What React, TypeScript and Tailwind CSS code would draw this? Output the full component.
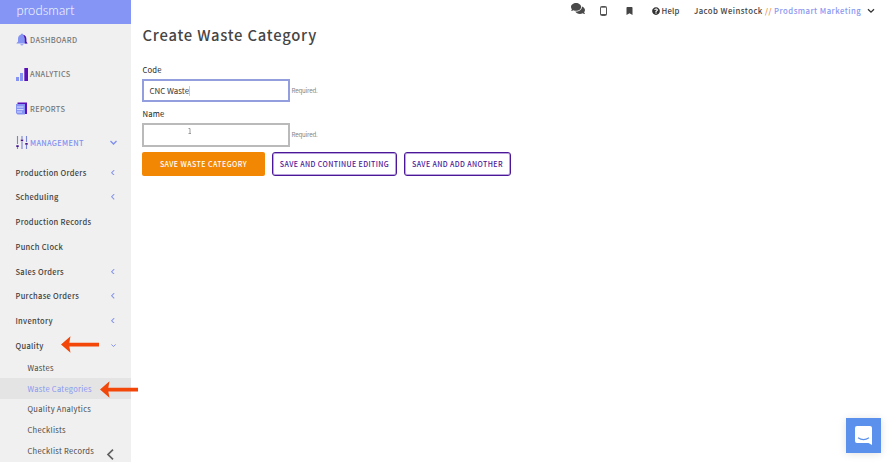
import { FaComments, FaBookmark, FaQuestionCircle } from "react-icons/fa";

const sections = [
  { label: "Production Orders", open: false, arrow: true },
  { label: "Scheduling", open: false, arrow: true },
  { label: "Production Records", open: false, arrow: false },
  { label: "Punch Clock", open: false, arrow: false },
  { label: "Sales Orders", open: false, arrow: true },
  { label: "Purchase Orders", open: false, arrow: true },
  { label: "Inventory", open: false, arrow: true },
  { label: "Quality", open: true, arrow: true },
];

const subItems = ["Wastes", "Waste Categories", "Quality Analytics", "Checklists", "Checklist Records"];

function BellIcon() {
  return (
    <svg className="shrink-0" width="12" height="13" viewBox="0 0 12 13">
      <path d="M6 0.4C7 .4 7 1.4 7 1.5C9.4 2.2 9.8 4 9.8 6V8.5L11.5 10.5H0.3L2 8.5V6C2 4 2.8 2.2 5 1.5C5 1.4 5 .4 6 .4Z" fill="#8594f3" />
      <path d="M7.4 1.7C9.7 2.4 10.4 4 10.4 6V8.5L11.6 10.5H8.8V5.5Z" fill="#5313ab" />
      <path d="M4.3 11.2H7.5C7.2 12.8 4.6 12.8 4.3 11.2Z" fill="#8594f3" />
    </svg>
  );
}

function BarsIcon() {
  return (
    <svg className="shrink-0" width="12" height="13" viewBox="0 0 12 13">
      <path d="M0 9H3V13H0ZM4 5H7V13H4Z" fill="#8594f3" />
      <path d="M8.3 0H12V13H8.3Z" fill="#5a10b8" />
    </svg>
  );
}

function ReportsIcon() {
  return (
    <svg className="shrink-0" width="12" height="13" viewBox="0 0 12 13">
      <path d="M1.5 .5H11V12H9V2.5H1.5Z" fill="#5a10b8" />
      <path d="M0 2H9V12.5H1.5L0 11Z" fill="#8594f3" />
      <path d="M1 5H7.5M1 7.6H7.5M1 10H6" stroke="#eef0ff" strokeWidth=".8" />
    </svg>
  );
}

function SlidersIcon() {
  return (
    <svg className="shrink-0" width="12" height="13" viewBox="0 0 12 13">
      <path d="M1.5 0V8M1.5 11V13M6 0V3M6 6V13M10.5 0V6M10.5 9V13" stroke="#7784d4" strokeWidth="1.1" />
      <path d="M.3 9.2H2.7V11H.3ZM4.8 3.4H7.2V5.2H4.8ZM9.3 6.9H11.7V8.7H9.3Z" fill="#43108e" />
    </svg>
  );
}

const mainItems = [
  { label: "DASHBOARD", icon: <BellIcon />, active: false },
  { label: "ANALYTICS", icon: <BarsIcon />, active: false },
  { label: "REPORTS", icon: <ReportsIcon />, active: false },
  { label: "MANAGEMENT", icon: <SlidersIcon />, active: true },
];

function Chevron({ down, size = 5 }: { down: boolean; size?: number }) {
  return down ? (
    <svg width={size} height={size} viewBox="0 0 6 6" fill="none">
      <path d="M.4 1.7L3 4.3L5.6 1.7" stroke="#8190ee" strokeWidth="1.2" />
    </svg>
  ) : (
    <svg width={size} height={size} viewBox="0 0 6 6" fill="none">
      <path d="M4.6 .2L1.8 3L4.6 5.8" stroke="#8190ee" strokeWidth="1.1" />
    </svg>
  );
}

function RedArrow({ className }: { className: string }) {
  return (
    <svg className={`absolute ${className}`} width="38" height="17" viewBox="0 0 38 17">
      <path d="M0 8.5L9.5 .3L8.3 6.7H38V10.4H8.3L9.5 16.7Z" fill="#f24708" />
    </svg>
  );
}

export default function App() {
  return (
    <div className="relative flex h-[462px] w-[890px] overflow-hidden bg-white font-['Noto_Sans_CJK_SC','Noto_Sans',sans-serif] text-[#3f3f3f]">
      <aside className="h-full w-[131px] shrink-0 bg-[#f0f0f0]">
        <div className="h-6 bg-[#8595f5] pl-[16.5px] font-['Lato',sans-serif] text-[13px] leading-[21px] font-light tracking-[0.1px] text-white">
          prodsmart
        </div>
        <nav>
          <div className="-mt-[1.4px]">
            {mainItems.map((item) => (
              <div key={item.label} className="flex h-[34.4px] items-center pl-[16px]">
                {item.icon}
                <span className={`ml-[2px] text-[7.4px] leading-none font-medium tracking-[0.3px] ${item.active ? "text-[#8190f0]" : "text-[#777777]"}`}>
                  {item.label}
                </span>
                {item.active && (
                  <span className="mr-[14px] ml-auto">
                    <Chevron down size={7} />
                  </span>
                )}
              </div>
            ))}
          </div>
          {sections.map((s) => (
            <div key={s.label} className="flex h-[24.7px] items-center justify-between pr-[15.5px] pl-[15.5px]">
              <span className="text-[7.5px] leading-none font-medium tracking-[0.3px]">{s.label}</span>
              {s.arrow && <Chevron down={s.open} size={s.open ? 5 : 5.5} />}
            </div>
          ))}
          {subItems.map((label) => (
            <div
              key={label}
              className={`flex h-[20.6px] items-center pl-[27.5px] text-[7.5px] leading-none tracking-[0.3px] ${label === "Waste Categories" ? "bg-[#e4e4e4] text-[#8796f2]" : "text-[#464646]"}`}
            >
              {label}
            </div>
          ))}
        </nav>
      </aside>

      <main className="flex-1 pl-[11px]">
        <header className="flex h-[21px] items-center text-[7.75px] leading-none font-medium">
          <FaComments className="-mt-[4px] ml-[429px] h-[13px] w-[14px] text-[#4a4a4a]" />
          <svg className="ml-[15px]" width="7" height="10" viewBox="0 0 7 10">
            <rect x=".5" y=".5" width="6" height="9" rx="1" fill="#fff" stroke="#555" />
            <path d="M.7 1.2H6.3M.7 8.5H6.3" stroke="#555" />
          </svg>
          <FaBookmark className="ml-[19px] h-[8px] w-[7px] text-[#444]" />
          <FaQuestionCircle className="ml-[18.5px] h-[8px] w-[8px] text-[#333]" />
          <span className="ml-[2px] w-[32.5px] tracking-[0.2px]">Help</span>
          <span className="whitespace-nowrap tracking-[0.45px]">
            Jacob Weinstock <span className="text-[#f08532]">//</span> <span className="text-[#8796f0]">Prodsmart Marketing</span>
          </span>
          <svg className="ml-[6px]" width="8" height="6" viewBox="0 0 8 6" fill="none">
            <path d="M1 1.2L4 4.2L7 1.2" stroke="#333" strokeWidth="1.3" />
          </svg>
        </header>

        <h1 className="mt-1 h-[20px] pl-[0.5px] text-[14.8px] leading-[20px] font-medium tracking-[0.78px] text-[#464646]">Create Waste Category</h1>

        <form className="pt-[19px]">
          <label className="block h-[15px] pl-[0.5px] text-[7.7px] leading-[12px] tracking-[0.15px] text-[#222]">Code</label>
          <div className="flex h-[23px] items-center">
            <div className="flex h-[23px] w-[148px] items-center border-2 border-[#929ede] pl-[5.5px] text-[7.9px] leading-none text-[#333]">
              CNC Waste<span className="h-[10px] w-px bg-[#c5c9ee]" />
            </div>
            <span className="mt-px ml-[1.5px] text-[6.2px] leading-none tracking-[-0.2px] text-[#858585]">Required.</span>
          </div>
          <label className="mt-[6px] block h-[15px] pl-[0.5px] text-[7.7px] leading-[12px] tracking-[0.15px] text-[#222]">Name</label>
          <div className="flex h-[24px] items-center">
            <div className="flex h-[24px] w-[148px] border-2 border-[#bababa] pt-[3px] pl-[44px]">
              <svg width="4" height="6" viewBox="0 0 4 6">
                <path d="M.5 .5H2V5.5M.5 5.5H3" fill="none" stroke="#777" strokeWidth=".7" />
              </svg>
            </div>
            <span className="ml-[1.5px] text-[6.2px] leading-none tracking-[-0.2px] text-[#858585]">Required.</span>
          </div>
          <div className="mt-[5px] flex h-[24px] gap-[7px] text-[7px] leading-none font-medium whitespace-nowrap">
            <button type="button" className="w-[123px] rounded-[2px] bg-[#f28703] tracking-[0.45px] text-white">SAVE WASTE CATEGORY</button>
            <button type="button" className="w-[125px] rounded-[3px] border border-[#4b1797] tracking-[0.4px] text-[#4b1797] shadow-[inset_0_0_0_1px_#b9a3dc]">SAVE AND CONTINUE EDITING</button>
            <button type="button" className="w-[107px] rounded-[3px] border border-[#4b1797] tracking-[0.4px] text-[#4b1797] shadow-[inset_0_0_0_1px_#b9a3dc]">SAVE AND ADD ANOTHER</button>
          </div>
        </form>
      </main>

      <RedArrow className="top-[336px] left-[61px]" />
      <RedArrow className="top-[380.5px] left-[99.5px]" />
      <svg className="absolute top-[449px] left-[106px]" width="9" height="11" viewBox="0 0 9 11" fill="none">
        <path d="M7 .7L2 5.5L7 10.3" stroke="#606060" strokeWidth="1.7" />
      </svg>
      <div className="absolute top-[418px] left-[846px] flex h-[35px] w-[35px] items-center justify-center bg-[#5b90ed] shadow-[0_1px_8px_rgba(0,0,0,0.12)]">
        <svg width="17" height="19" viewBox="0 0 17 19">
          <path d="M2 0H15Q17 0 17 2V19L13.5 17H2Q0 17 0 15V2Q0 0 2 0Z" fill="#fff" />
          <path d="M3 11.8Q8.5 15.5 14 11.8" fill="none" stroke="#5b90ed" strokeWidth="1.1" />
        </svg>
      </div>
    </div>
  );
}
